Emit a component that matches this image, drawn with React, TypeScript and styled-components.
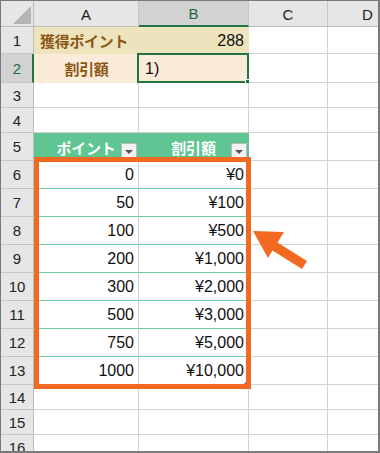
import React from "react";
import styled, { createGlobalStyle, css } from "styled-components";

const GlobalStyle = createGlobalStyle`
  html, body { margin: 0; padding: 0; background: #fff; }
  * { box-sizing: border-box; }
`;

const FONT = `"Liberation Sans", "Noto Sans CJK JP", sans-serif`;
const GRID = "#d4d4d4";
const SEL = "#217346";

const Frame = styled.div`
  position: relative;
  width: 380px;
  height: 453px;
  overflow: hidden;
  border-style: solid;
  border-color: #7a7a7a;
  border-width: 1px 2px 2px 1px;
  font-family: ${FONT};
  background: #fff;
`;

const Sheet = styled.div`
  display: grid;
  grid-template-columns: 33px 105px 110px 79px 80px;
  grid-template-rows: 26px 27px 29px 25px 25px 28px repeat(8, 28px) 25px 25px 25px;
`;

const Corner = styled.div`
  position: relative;
  background: #e6e6e6;
  border-right: 1px solid #bdbdbd;
  border-bottom: 1px solid #bdbdbd;
  display: flex;
  align-items: flex-end;
  justify-content: flex-end;
  padding: 0 2px 2px 0;
`;

const ColHeader = styled.div<{ $sel?: boolean }>`
  background: ${(p) => (p.$sel ? "#d2d2d2" : "#e6e6e6")};
  border-right: 1px solid #c6c6c6;
  border-bottom: ${(p) => (p.$sel ? `2px solid ${SEL}` : "1px solid #bdbdbd")};
  color: ${(p) => (p.$sel ? "#1d6a40" : "#222")};
  font-size: 15px;
  display: flex;
  align-items: center;
  justify-content: center;
  padding-top: 1px;
`;

const RowHeader = styled.div<{ $sel?: boolean }>`
  background: ${(p) => (p.$sel ? "#d2d2d2" : "#e6e6e6")};
  border-right: ${(p) => (p.$sel ? `2px solid ${SEL}` : "1px solid #bdbdbd")};
  border-bottom: 1px solid #c6c6c6;
  color: ${(p) => (p.$sel ? "#1d6a40" : "#222")};
  font-size: 15px;
  display: flex;
  align-items: center;
  justify-content: center;
  padding-left: ${(p) => (p.$sel ? "1px" : "0")};
`;

type Align = "left" | "center" | "right";

const Cell = styled.div<{
  $fill?: string;
  $align?: Align;
  $bold?: boolean;
  $color?: string;
  $line?: string;
  $vline?: string;
}>`
  position: relative;
  background: ${(p) => p.$fill || "#fff"};
  border-right: 1px solid ${(p) => p.$vline || (p.$fill ? "transparent" : GRID)};
  border-bottom: 1px solid ${(p) => p.$line || (p.$fill ? "transparent" : GRID)};
  display: flex;
  align-items: center;
  justify-content: ${(p) =>
    p.$align === "right" ? "flex-end" : p.$align === "center" ? "center" : "flex-start"};
  padding: 1px 5px 0 6px;
  font-size: 16px;
  font-weight: ${(p) => (p.$bold ? 700 : 400)};
  color: ${(p) => p.$color || "#111"};
  white-space: nowrap;
  ${(p) =>
    p.$align === "right" &&
    css`
      padding-right: 4px;
    `}
`;

const JpText = styled.span<{ $size?: number }>`
  font-family: "Noto Sans CJK JP", sans-serif;
  font-size: ${(p) => p.$size || 15}px;
  letter-spacing: -0.3px;
`;

const Selection = styled.div`
  position: absolute;
  left: -2px;
  top: -1px;
  right: -1px;
  bottom: -1px;
  border: 2px solid ${SEL};
  pointer-events: none;
`;

const FillHandle = styled.div`
  position: absolute;
  right: -4px;
  bottom: -4px;
  width: 6px;
  height: 6px;
  background: ${SEL};
  border: 1px solid #fff;
`;

const TableHeadCell = styled.div`
  background: #5ec593;
  display: grid;
  grid-template-columns: 17px 1fr 17px;
  align-items: center;
  color: #fff;
  font-weight: 700;
  padding-right: 1px;
`;

const HeadLabel = styled.span`
  grid-column: 2;
  text-align: center;
  font-family: "Noto Sans CJK JP", sans-serif;
  font-size: 15px;
  letter-spacing: -0.2px;
`;

const FilterButton = styled.div`
  grid-column: 3;
  align-self: end;
  margin-bottom: 3px;
  width: 16px;
  height: 15px;
  background: #f3f3f3;
  border: 1px solid #b9b9b9;
  display: flex;
  align-items: center;
  justify-content: center;
  padding-top: 2px;
  &::after {
    content: "";
    border-left: 4px solid transparent;
    border-right: 4px solid transparent;
    border-top: 4px solid #555;
  }
`;

const ResizeHandle = styled.div`
  position: absolute;
  right: 0;
  bottom: 0;
  width: 0;
  height: 0;
  border-left: 4px solid transparent;
  border-bottom: 4px solid #3355aa;
`;

const Highlight = styled.div`
  position: absolute;
  left: 33px;
  top: 156px;
  width: 217px;
  height: 232px;
  border: 5px solid #f26a22;
  pointer-events: none;
`;

const ArrowSvg = styled.svg`
  position: absolute;
  left: 0;
  top: 0;
  pointer-events: none;
`;

const CornerTri = () => (
  <svg width="18" height="18" viewBox="0 0 18 18">
    <polygon points="18,0 18,18 0,18" fill="#b4b4b4" />
  </svg>
);

const columns = ["A", "B", "C", "D"];
const tableRows: [string, string][] = [
  ["0", "¥0"],
  ["50", "¥100"],
  ["100", "¥500"],
  ["200", "¥1,000"],
  ["300", "¥2,000"],
  ["500", "¥3,000"],
  ["750", "¥5,000"],
  ["1000", "¥10,000"],
];

const TABLE_LINE = "#6fcb9c";
const BROWN = "#8a5716";

export default function App() {
  const emptyRow = (n: number) => (
    <React.Fragment key={`r${n}`}>
      <RowHeader>{n}</RowHeader>
      <Cell />
      <Cell />
      <Cell />
      <Cell />
    </React.Fragment>
  );

  return (
    <>
      <GlobalStyle />
      <Frame>
        <Sheet>
          <Corner>
            <CornerTri />
          </Corner>
          {columns.map((c) => (
            <ColHeader key={c} $sel={c === "B"}>
              {c}
            </ColHeader>
          ))}

          <RowHeader>1</RowHeader>
          <Cell $fill="#ede4be" $bold $color={BROWN}>
            <JpText>獲得ポイント</JpText>
          </Cell>
          <Cell $fill="#ede4be" $align="right">
            288
          </Cell>
          <Cell />
          <Cell />

          <RowHeader $sel>2</RowHeader>
          <Cell $fill="#fbebd9" $align="center" $bold $color={BROWN}>
            <JpText>割引額</JpText>
          </Cell>
          <Cell $fill="#fbebd9">
            1)
            <Selection>
              <FillHandle />
            </Selection>
          </Cell>
          <Cell />
          <Cell />

          {emptyRow(3)}
          {emptyRow(4)}

          <RowHeader>5</RowHeader>
          <TableHeadCell>
            <HeadLabel>ポイント</HeadLabel>
            <FilterButton />
          </TableHeadCell>
          <TableHeadCell>
            <HeadLabel>割引額</HeadLabel>
            <FilterButton />
          </TableHeadCell>
          <Cell />
          <Cell />

          {tableRows.map(([pt, yen], i) => (
            <React.Fragment key={pt}>
              <RowHeader>{i + 6}</RowHeader>
              <Cell $align="right" $line={TABLE_LINE} $vline={GRID}>
                {pt}
              </Cell>
              <Cell $align="right" $line={TABLE_LINE} $vline={GRID}>
                {yen}
                {i === tableRows.length - 1 && <ResizeHandle />}
              </Cell>
              <Cell />
              <Cell />
            </React.Fragment>
          ))}

          {emptyRow(14)}
          {emptyRow(15)}
          {emptyRow(16)}
        </Sheet>

        <Highlight />
        <ArrowSvg width="378" height="450" viewBox="0 0 378 450">
          <polygon
            points="252,230 267,257 271.5,249.5 301,268 306,260 276.5,241.5 283,231"
            fill="#f26a22"
          />
        </ArrowSvg>
      </Frame>
    </>
  );
}
